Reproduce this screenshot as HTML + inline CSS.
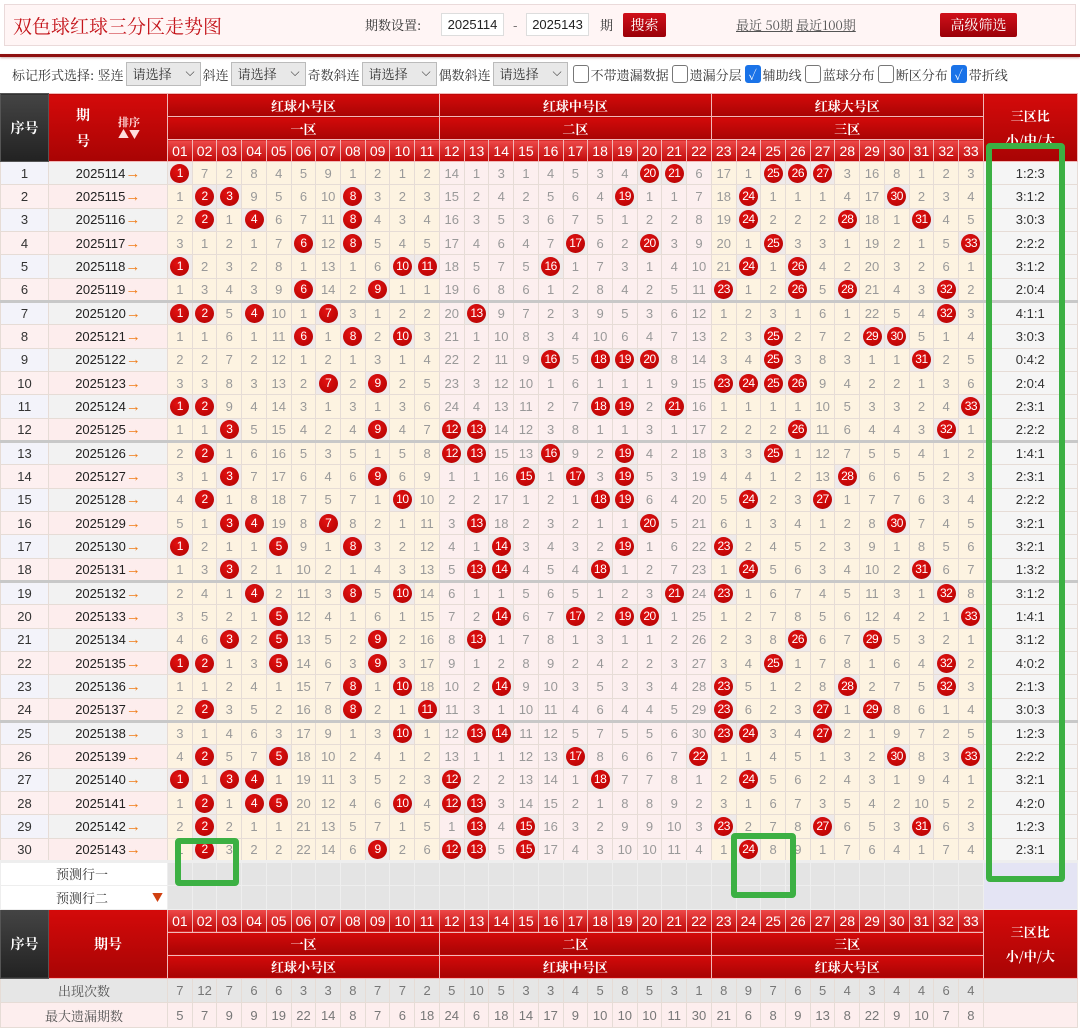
<!DOCTYPE html>
<html><head><meta charset="utf-8">
<style>
*{margin:0;padding:0;box-sizing:border-box}
body{width:1080px;height:1029px;overflow:hidden;background:#fff;font-family:"Liberation Sans","Noto Serif CJK SC",serif;position:relative}
#top{position:absolute;left:4px;top:4px;width:1072px;height:42px;background:#fff5f5;border:1px solid #eadada}
#top .t{position:absolute;left:8px;top:7px;font-size:19px;color:#c4141a;font-family:"Noto Serif CJK SC",serif}
#top .l{position:absolute;top:10px;font-size:13px;color:#333;font-family:"Noto Serif CJK SC",serif}
#top .in{position:absolute;top:8px;height:23px;width:63px;border:1px solid #ddd;background:#fff;font-size:13px;line-height:21px;text-align:center;color:#222}
#top .btn{position:absolute;top:8px;height:24px;background:linear-gradient(#d0101a,#9a0008);color:#fff;font-size:14px;line-height:24px;text-align:center;border-radius:2px;font-family:"Noto Serif CJK SC",serif}
#top a{color:#555;text-decoration:underline}
#line{position:absolute;left:0;top:54px;width:1080px;height:3px;background:#8e1010;box-shadow:0 1px 2px #caa}
#flt{position:absolute;left:12px;top:61px;height:26px;font-size:13px;color:#333;font-family:"Noto Serif CJK SC",serif;white-space:nowrap;display:flex;align-items:center}
.sel{display:inline-block;width:75px;height:24px;border:1px solid #bbb;background:#e8e8e8;margin:0 2px;padding-left:6px;line-height:22px;position:relative}
.sel:after{content:"⌵";position:absolute;right:5px;top:-2px;font-size:12px;color:#333}
.cb{display:inline-block;width:16px;height:18px;border:1px solid #777;border-radius:3px;background:#fff;margin:0 2px 0 3px;vertical-align:middle}
.cb.on{background:#1a73e8;border-color:#1a73e8;color:#fff;font-size:13px;line-height:17px;text-align:center}
table{position:absolute;left:0;top:93px;width:1077px;border-collapse:collapse;table-layout:fixed}
td{border:1px solid #e6dcd6;text-align:center;font-size:13px;color:#999;padding:0;overflow:hidden;white-space:nowrap}
tr.d{height:23.33px}
.h td{background:linear-gradient(#d40a0a,#a80404);color:#fff;border:1px solid #f1b8b8;font-family:"Noto Serif CJK SC",serif;font-size:13px;font-weight:bold}
.h td.n{background:linear-gradient(#ee4a4a,#c00808);font-family:"Liberation Sans",sans-serif;font-weight:normal;font-size:14px}
.h td.k{background:linear-gradient(#444,#222);border-color:#555}
col.c1{background:#fdf3e1}col.c2{background:#fcefef}
td.b{background:#efeaea}
td.b i{display:inline-block;width:19px;height:19px;border-radius:50%;background:radial-gradient(circle at 40% 35%,#e21212,#b00000);color:#fff;font-style:normal;font-size:12px;line-height:19px;letter-spacing:-.5px;vertical-align:middle}
td.x{background:#f3f3fa;color:#333;font-size:13px}
td.q{background:#f2f2f2;color:#222;font-size:13px}
tr.d:nth-child(even) td.x{background:#fdf0f0}
tr.d:nth-child(even) td.q{background:#fdeded}
td.q s{text-decoration:none;color:#f07d18;font-weight:bold;font-size:15px;line-height:10px}
td.r{background:#f5f5f5;color:#333;font-size:13px}
tr.g td{border-top:3px solid #c8c8c8}
tr.p{height:24px}
tr.p td{background:#e4e4e4;border-color:#eee}
tr.p td.lb{background:#fff;color:#333;font-family:"Noto Serif CJK SC",serif;text-align:left;padding-left:55px;position:relative}
tr.p td.lv{background:#e4e4f4}
tr.s1,tr.s2{height:24.5px}
tr.s1 td{background:#e6e6e6;color:#777}
tr.s2 td{background:#fdeeee;color:#777}
tr.s1 td.lb,tr.s2 td.lb{font-family:"Noto Serif CJK SC",serif;color:#555}
.gb{position:absolute;border:6px solid #3cb043;border-radius:4px}
</style></head><body>
<div id="top">
<div class="t">双色球红球三分区走势图</div>
<div class="l" style="left:360px">期数设置:</div>
<div class="in" style="left:436px">2025114</div>
<div class="l" style="left:508px">-</div>
<div class="in" style="left:521px">2025143</div>
<div class="l" style="left:595px">期</div>
<div class="btn" style="left:618px;width:43px">搜索</div>
<div class="l" style="left:731px"><a>最近 50期</a> <a>最近100期</a></div>
<div class="btn" style="left:935px;width:77px">高级筛选</div>
</div>
<div id="line"></div>
<div id="flt">标记形式选择: 竖连<span class="sel">请选择</span>斜连<span class="sel">请选择</span>奇数斜连<span class="sel">请选择</span>偶数斜连<span class="sel">请选择</span><span class="cb"></span>不带遗漏数据<span class="cb"></span>遗漏分层<span class="cb on">✓</span>辅助线<span class="cb"></span>蓝球分布<span class="cb"></span>断区分布<span class="cb on">✓</span>带折线</div>

<table>
<colgroup><col style="width:48px"><col style="width:119px"><col class="c1" span="11" style="width:24.73px"><col class="c2" span="11" style="width:24.73px"><col class="c1" span="11" style="width:24.73px"><col style="width:94px"></colgroup>
<tbody>
<tr class="h" style="height:23px"><td class="k" rowspan="3" style="font-size:14px">序号</td><td rowspan="3"><div style="display:flex;align-items:center;justify-content:center;gap:28px"><div style="line-height:26px;font-size:14px">期<br>号</div><div style="font-size:11px;line-height:12px;color:#fdd">排序<br>▲▼</div></div></td><td colspan="11">红球小号区</td><td colspan="11">红球中号区</td><td colspan="11">红球大号区</td><td rowspan="3" style="line-height:24px">三区比<br>小/中/大</td></tr>
<tr class="h" style="height:23px"><td colspan="11">一区</td><td colspan="11">二区</td><td colspan="11">三区</td></tr>
<tr class="h" style="height:22px"><td class="n">01</td><td class="n">02</td><td class="n">03</td><td class="n">04</td><td class="n">05</td><td class="n">06</td><td class="n">07</td><td class="n">08</td><td class="n">09</td><td class="n">10</td><td class="n">11</td><td class="n">12</td><td class="n">13</td><td class="n">14</td><td class="n">15</td><td class="n">16</td><td class="n">17</td><td class="n">18</td><td class="n">19</td><td class="n">20</td><td class="n">21</td><td class="n">22</td><td class="n">23</td><td class="n">24</td><td class="n">25</td><td class="n">26</td><td class="n">27</td><td class="n">28</td><td class="n">29</td><td class="n">30</td><td class="n">31</td><td class="n">32</td><td class="n">33</td></tr>
</tbody>
<tbody>
<tr class="d"><td class="x">1</td><td class="q">2025114<s>→</s></td><td class="b"><i>1</i></td><td>7</td><td>2</td><td>8</td><td>4</td><td>5</td><td>9</td><td>1</td><td>2</td><td>1</td><td>2</td><td>14</td><td>1</td><td>3</td><td>1</td><td>4</td><td>5</td><td>3</td><td>4</td><td class="b"><i>20</i></td><td class="b"><i>21</i></td><td>6</td><td>17</td><td>1</td><td class="b"><i>25</i></td><td class="b"><i>26</i></td><td class="b"><i>27</i></td><td>3</td><td>16</td><td>8</td><td>1</td><td>2</td><td>3</td><td class="r">1:2:3</td></tr>
<tr class="d"><td class="x">2</td><td class="q">2025115<s>→</s></td><td>1</td><td class="b"><i>2</i></td><td class="b"><i>3</i></td><td>9</td><td>5</td><td>6</td><td>10</td><td class="b"><i>8</i></td><td>3</td><td>2</td><td>3</td><td>15</td><td>2</td><td>4</td><td>2</td><td>5</td><td>6</td><td>4</td><td class="b"><i>19</i></td><td>1</td><td>1</td><td>7</td><td>18</td><td class="b"><i>24</i></td><td>1</td><td>1</td><td>1</td><td>4</td><td>17</td><td class="b"><i>30</i></td><td>2</td><td>3</td><td>4</td><td class="r">3:1:2</td></tr>
<tr class="d"><td class="x">3</td><td class="q">2025116<s>→</s></td><td>2</td><td class="b"><i>2</i></td><td>1</td><td class="b"><i>4</i></td><td>6</td><td>7</td><td>11</td><td class="b"><i>8</i></td><td>4</td><td>3</td><td>4</td><td>16</td><td>3</td><td>5</td><td>3</td><td>6</td><td>7</td><td>5</td><td>1</td><td>2</td><td>2</td><td>8</td><td>19</td><td class="b"><i>24</i></td><td>2</td><td>2</td><td>2</td><td class="b"><i>28</i></td><td>18</td><td>1</td><td class="b"><i>31</i></td><td>4</td><td>5</td><td class="r">3:0:3</td></tr>
<tr class="d"><td class="x">4</td><td class="q">2025117<s>→</s></td><td>3</td><td>1</td><td>2</td><td>1</td><td>7</td><td class="b"><i>6</i></td><td>12</td><td class="b"><i>8</i></td><td>5</td><td>4</td><td>5</td><td>17</td><td>4</td><td>6</td><td>4</td><td>7</td><td class="b"><i>17</i></td><td>6</td><td>2</td><td class="b"><i>20</i></td><td>3</td><td>9</td><td>20</td><td>1</td><td class="b"><i>25</i></td><td>3</td><td>3</td><td>1</td><td>19</td><td>2</td><td>1</td><td>5</td><td class="b"><i>33</i></td><td class="r">2:2:2</td></tr>
<tr class="d"><td class="x">5</td><td class="q">2025118<s>→</s></td><td class="b"><i>1</i></td><td>2</td><td>3</td><td>2</td><td>8</td><td>1</td><td>13</td><td>1</td><td>6</td><td class="b"><i>10</i></td><td class="b"><i>11</i></td><td>18</td><td>5</td><td>7</td><td>5</td><td class="b"><i>16</i></td><td>1</td><td>7</td><td>3</td><td>1</td><td>4</td><td>10</td><td>21</td><td class="b"><i>24</i></td><td>1</td><td class="b"><i>26</i></td><td>4</td><td>2</td><td>20</td><td>3</td><td>2</td><td>6</td><td>1</td><td class="r">3:1:2</td></tr>
<tr class="d"><td class="x">6</td><td class="q">2025119<s>→</s></td><td>1</td><td>3</td><td>4</td><td>3</td><td>9</td><td class="b"><i>6</i></td><td>14</td><td>2</td><td class="b"><i>9</i></td><td>1</td><td>1</td><td>19</td><td>6</td><td>8</td><td>6</td><td>1</td><td>2</td><td>8</td><td>4</td><td>2</td><td>5</td><td>11</td><td class="b"><i>23</i></td><td>1</td><td>2</td><td class="b"><i>26</i></td><td>5</td><td class="b"><i>28</i></td><td>21</td><td>4</td><td>3</td><td class="b"><i>32</i></td><td>2</td><td class="r">2:0:4</td></tr>
<tr class="d g"><td class="x">7</td><td class="q">2025120<s>→</s></td><td class="b"><i>1</i></td><td class="b"><i>2</i></td><td>5</td><td class="b"><i>4</i></td><td>10</td><td>1</td><td class="b"><i>7</i></td><td>3</td><td>1</td><td>2</td><td>2</td><td>20</td><td class="b"><i>13</i></td><td>9</td><td>7</td><td>2</td><td>3</td><td>9</td><td>5</td><td>3</td><td>6</td><td>12</td><td>1</td><td>2</td><td>3</td><td>1</td><td>6</td><td>1</td><td>22</td><td>5</td><td>4</td><td class="b"><i>32</i></td><td>3</td><td class="r">4:1:1</td></tr>
<tr class="d"><td class="x">8</td><td class="q">2025121<s>→</s></td><td>1</td><td>1</td><td>6</td><td>1</td><td>11</td><td class="b"><i>6</i></td><td>1</td><td class="b"><i>8</i></td><td>2</td><td class="b"><i>10</i></td><td>3</td><td>21</td><td>1</td><td>10</td><td>8</td><td>3</td><td>4</td><td>10</td><td>6</td><td>4</td><td>7</td><td>13</td><td>2</td><td>3</td><td class="b"><i>25</i></td><td>2</td><td>7</td><td>2</td><td class="b"><i>29</i></td><td class="b"><i>30</i></td><td>5</td><td>1</td><td>4</td><td class="r">3:0:3</td></tr>
<tr class="d"><td class="x">9</td><td class="q">2025122<s>→</s></td><td>2</td><td>2</td><td>7</td><td>2</td><td>12</td><td>1</td><td>2</td><td>1</td><td>3</td><td>1</td><td>4</td><td>22</td><td>2</td><td>11</td><td>9</td><td class="b"><i>16</i></td><td>5</td><td class="b"><i>18</i></td><td class="b"><i>19</i></td><td class="b"><i>20</i></td><td>8</td><td>14</td><td>3</td><td>4</td><td class="b"><i>25</i></td><td>3</td><td>8</td><td>3</td><td>1</td><td>1</td><td class="b"><i>31</i></td><td>2</td><td>5</td><td class="r">0:4:2</td></tr>
<tr class="d"><td class="x">10</td><td class="q">2025123<s>→</s></td><td>3</td><td>3</td><td>8</td><td>3</td><td>13</td><td>2</td><td class="b"><i>7</i></td><td>2</td><td class="b"><i>9</i></td><td>2</td><td>5</td><td>23</td><td>3</td><td>12</td><td>10</td><td>1</td><td>6</td><td>1</td><td>1</td><td>1</td><td>9</td><td>15</td><td class="b"><i>23</i></td><td class="b"><i>24</i></td><td class="b"><i>25</i></td><td class="b"><i>26</i></td><td>9</td><td>4</td><td>2</td><td>2</td><td>1</td><td>3</td><td>6</td><td class="r">2:0:4</td></tr>
<tr class="d"><td class="x">11</td><td class="q">2025124<s>→</s></td><td class="b"><i>1</i></td><td class="b"><i>2</i></td><td>9</td><td>4</td><td>14</td><td>3</td><td>1</td><td>3</td><td>1</td><td>3</td><td>6</td><td>24</td><td>4</td><td>13</td><td>11</td><td>2</td><td>7</td><td class="b"><i>18</i></td><td class="b"><i>19</i></td><td>2</td><td class="b"><i>21</i></td><td>16</td><td>1</td><td>1</td><td>1</td><td>1</td><td>10</td><td>5</td><td>3</td><td>3</td><td>2</td><td>4</td><td class="b"><i>33</i></td><td class="r">2:3:1</td></tr>
<tr class="d"><td class="x">12</td><td class="q">2025125<s>→</s></td><td>1</td><td>1</td><td class="b"><i>3</i></td><td>5</td><td>15</td><td>4</td><td>2</td><td>4</td><td class="b"><i>9</i></td><td>4</td><td>7</td><td class="b"><i>12</i></td><td class="b"><i>13</i></td><td>14</td><td>12</td><td>3</td><td>8</td><td>1</td><td>1</td><td>3</td><td>1</td><td>17</td><td>2</td><td>2</td><td>2</td><td class="b"><i>26</i></td><td>11</td><td>6</td><td>4</td><td>4</td><td>3</td><td class="b"><i>32</i></td><td>1</td><td class="r">2:2:2</td></tr>
<tr class="d g"><td class="x">13</td><td class="q">2025126<s>→</s></td><td>2</td><td class="b"><i>2</i></td><td>1</td><td>6</td><td>16</td><td>5</td><td>3</td><td>5</td><td>1</td><td>5</td><td>8</td><td class="b"><i>12</i></td><td class="b"><i>13</i></td><td>15</td><td>13</td><td class="b"><i>16</i></td><td>9</td><td>2</td><td class="b"><i>19</i></td><td>4</td><td>2</td><td>18</td><td>3</td><td>3</td><td class="b"><i>25</i></td><td>1</td><td>12</td><td>7</td><td>5</td><td>5</td><td>4</td><td>1</td><td>2</td><td class="r">1:4:1</td></tr>
<tr class="d"><td class="x">14</td><td class="q">2025127<s>→</s></td><td>3</td><td>1</td><td class="b"><i>3</i></td><td>7</td><td>17</td><td>6</td><td>4</td><td>6</td><td class="b"><i>9</i></td><td>6</td><td>9</td><td>1</td><td>1</td><td>16</td><td class="b"><i>15</i></td><td>1</td><td class="b"><i>17</i></td><td>3</td><td class="b"><i>19</i></td><td>5</td><td>3</td><td>19</td><td>4</td><td>4</td><td>1</td><td>2</td><td>13</td><td class="b"><i>28</i></td><td>6</td><td>6</td><td>5</td><td>2</td><td>3</td><td class="r">2:3:1</td></tr>
<tr class="d"><td class="x">15</td><td class="q">2025128<s>→</s></td><td>4</td><td class="b"><i>2</i></td><td>1</td><td>8</td><td>18</td><td>7</td><td>5</td><td>7</td><td>1</td><td class="b"><i>10</i></td><td>10</td><td>2</td><td>2</td><td>17</td><td>1</td><td>2</td><td>1</td><td class="b"><i>18</i></td><td class="b"><i>19</i></td><td>6</td><td>4</td><td>20</td><td>5</td><td class="b"><i>24</i></td><td>2</td><td>3</td><td class="b"><i>27</i></td><td>1</td><td>7</td><td>7</td><td>6</td><td>3</td><td>4</td><td class="r">2:2:2</td></tr>
<tr class="d"><td class="x">16</td><td class="q">2025129<s>→</s></td><td>5</td><td>1</td><td class="b"><i>3</i></td><td class="b"><i>4</i></td><td>19</td><td>8</td><td class="b"><i>7</i></td><td>8</td><td>2</td><td>1</td><td>11</td><td>3</td><td class="b"><i>13</i></td><td>18</td><td>2</td><td>3</td><td>2</td><td>1</td><td>1</td><td class="b"><i>20</i></td><td>5</td><td>21</td><td>6</td><td>1</td><td>3</td><td>4</td><td>1</td><td>2</td><td>8</td><td class="b"><i>30</i></td><td>7</td><td>4</td><td>5</td><td class="r">3:2:1</td></tr>
<tr class="d"><td class="x">17</td><td class="q">2025130<s>→</s></td><td class="b"><i>1</i></td><td>2</td><td>1</td><td>1</td><td class="b"><i>5</i></td><td>9</td><td>1</td><td class="b"><i>8</i></td><td>3</td><td>2</td><td>12</td><td>4</td><td>1</td><td class="b"><i>14</i></td><td>3</td><td>4</td><td>3</td><td>2</td><td class="b"><i>19</i></td><td>1</td><td>6</td><td>22</td><td class="b"><i>23</i></td><td>2</td><td>4</td><td>5</td><td>2</td><td>3</td><td>9</td><td>1</td><td>8</td><td>5</td><td>6</td><td class="r">3:2:1</td></tr>
<tr class="d"><td class="x">18</td><td class="q">2025131<s>→</s></td><td>1</td><td>3</td><td class="b"><i>3</i></td><td>2</td><td>1</td><td>10</td><td>2</td><td>1</td><td>4</td><td>3</td><td>13</td><td>5</td><td class="b"><i>13</i></td><td class="b"><i>14</i></td><td>4</td><td>5</td><td>4</td><td class="b"><i>18</i></td><td>1</td><td>2</td><td>7</td><td>23</td><td>1</td><td class="b"><i>24</i></td><td>5</td><td>6</td><td>3</td><td>4</td><td>10</td><td>2</td><td class="b"><i>31</i></td><td>6</td><td>7</td><td class="r">1:3:2</td></tr>
<tr class="d g"><td class="x">19</td><td class="q">2025132<s>→</s></td><td>2</td><td>4</td><td>1</td><td class="b"><i>4</i></td><td>2</td><td>11</td><td>3</td><td class="b"><i>8</i></td><td>5</td><td class="b"><i>10</i></td><td>14</td><td>6</td><td>1</td><td>1</td><td>5</td><td>6</td><td>5</td><td>1</td><td>2</td><td>3</td><td class="b"><i>21</i></td><td>24</td><td class="b"><i>23</i></td><td>1</td><td>6</td><td>7</td><td>4</td><td>5</td><td>11</td><td>3</td><td>1</td><td class="b"><i>32</i></td><td>8</td><td class="r">3:1:2</td></tr>
<tr class="d"><td class="x">20</td><td class="q">2025133<s>→</s></td><td>3</td><td>5</td><td>2</td><td>1</td><td class="b"><i>5</i></td><td>12</td><td>4</td><td>1</td><td>6</td><td>1</td><td>15</td><td>7</td><td>2</td><td class="b"><i>14</i></td><td>6</td><td>7</td><td class="b"><i>17</i></td><td>2</td><td class="b"><i>19</i></td><td class="b"><i>20</i></td><td>1</td><td>25</td><td>1</td><td>2</td><td>7</td><td>8</td><td>5</td><td>6</td><td>12</td><td>4</td><td>2</td><td>1</td><td class="b"><i>33</i></td><td class="r">1:4:1</td></tr>
<tr class="d"><td class="x">21</td><td class="q">2025134<s>→</s></td><td>4</td><td>6</td><td class="b"><i>3</i></td><td>2</td><td class="b"><i>5</i></td><td>13</td><td>5</td><td>2</td><td class="b"><i>9</i></td><td>2</td><td>16</td><td>8</td><td class="b"><i>13</i></td><td>1</td><td>7</td><td>8</td><td>1</td><td>3</td><td>1</td><td>1</td><td>2</td><td>26</td><td>2</td><td>3</td><td>8</td><td class="b"><i>26</i></td><td>6</td><td>7</td><td class="b"><i>29</i></td><td>5</td><td>3</td><td>2</td><td>1</td><td class="r">3:1:2</td></tr>
<tr class="d"><td class="x">22</td><td class="q">2025135<s>→</s></td><td class="b"><i>1</i></td><td class="b"><i>2</i></td><td>1</td><td>3</td><td class="b"><i>5</i></td><td>14</td><td>6</td><td>3</td><td class="b"><i>9</i></td><td>3</td><td>17</td><td>9</td><td>1</td><td>2</td><td>8</td><td>9</td><td>2</td><td>4</td><td>2</td><td>2</td><td>3</td><td>27</td><td>3</td><td>4</td><td class="b"><i>25</i></td><td>1</td><td>7</td><td>8</td><td>1</td><td>6</td><td>4</td><td class="b"><i>32</i></td><td>2</td><td class="r">4:0:2</td></tr>
<tr class="d"><td class="x">23</td><td class="q">2025136<s>→</s></td><td>1</td><td>1</td><td>2</td><td>4</td><td>1</td><td>15</td><td>7</td><td class="b"><i>8</i></td><td>1</td><td class="b"><i>10</i></td><td>18</td><td>10</td><td>2</td><td class="b"><i>14</i></td><td>9</td><td>10</td><td>3</td><td>5</td><td>3</td><td>3</td><td>4</td><td>28</td><td class="b"><i>23</i></td><td>5</td><td>1</td><td>2</td><td>8</td><td class="b"><i>28</i></td><td>2</td><td>7</td><td>5</td><td class="b"><i>32</i></td><td>3</td><td class="r">2:1:3</td></tr>
<tr class="d"><td class="x">24</td><td class="q">2025137<s>→</s></td><td>2</td><td class="b"><i>2</i></td><td>3</td><td>5</td><td>2</td><td>16</td><td>8</td><td class="b"><i>8</i></td><td>2</td><td>1</td><td class="b"><i>11</i></td><td>11</td><td>3</td><td>1</td><td>10</td><td>11</td><td>4</td><td>6</td><td>4</td><td>4</td><td>5</td><td>29</td><td class="b"><i>23</i></td><td>6</td><td>2</td><td>3</td><td class="b"><i>27</i></td><td>1</td><td class="b"><i>29</i></td><td>8</td><td>6</td><td>1</td><td>4</td><td class="r">3:0:3</td></tr>
<tr class="d g"><td class="x">25</td><td class="q">2025138<s>→</s></td><td>3</td><td>1</td><td>4</td><td>6</td><td>3</td><td>17</td><td>9</td><td>1</td><td>3</td><td class="b"><i>10</i></td><td>1</td><td>12</td><td class="b"><i>13</i></td><td class="b"><i>14</i></td><td>11</td><td>12</td><td>5</td><td>7</td><td>5</td><td>5</td><td>6</td><td>30</td><td class="b"><i>23</i></td><td class="b"><i>24</i></td><td>3</td><td>4</td><td class="b"><i>27</i></td><td>2</td><td>1</td><td>9</td><td>7</td><td>2</td><td>5</td><td class="r">1:2:3</td></tr>
<tr class="d"><td class="x">26</td><td class="q">2025139<s>→</s></td><td>4</td><td class="b"><i>2</i></td><td>5</td><td>7</td><td class="b"><i>5</i></td><td>18</td><td>10</td><td>2</td><td>4</td><td>1</td><td>2</td><td>13</td><td>1</td><td>1</td><td>12</td><td>13</td><td class="b"><i>17</i></td><td>8</td><td>6</td><td>6</td><td>7</td><td class="b"><i>22</i></td><td>1</td><td>1</td><td>4</td><td>5</td><td>1</td><td>3</td><td>2</td><td class="b"><i>30</i></td><td>8</td><td>3</td><td class="b"><i>33</i></td><td class="r">2:2:2</td></tr>
<tr class="d"><td class="x">27</td><td class="q">2025140<s>→</s></td><td class="b"><i>1</i></td><td>1</td><td class="b"><i>3</i></td><td class="b"><i>4</i></td><td>1</td><td>19</td><td>11</td><td>3</td><td>5</td><td>2</td><td>3</td><td class="b"><i>12</i></td><td>2</td><td>2</td><td>13</td><td>14</td><td>1</td><td class="b"><i>18</i></td><td>7</td><td>7</td><td>8</td><td>1</td><td>2</td><td class="b"><i>24</i></td><td>5</td><td>6</td><td>2</td><td>4</td><td>3</td><td>1</td><td>9</td><td>4</td><td>1</td><td class="r">3:2:1</td></tr>
<tr class="d"><td class="x">28</td><td class="q">2025141<s>→</s></td><td>1</td><td class="b"><i>2</i></td><td>1</td><td class="b"><i>4</i></td><td class="b"><i>5</i></td><td>20</td><td>12</td><td>4</td><td>6</td><td class="b"><i>10</i></td><td>4</td><td class="b"><i>12</i></td><td class="b"><i>13</i></td><td>3</td><td>14</td><td>15</td><td>2</td><td>1</td><td>8</td><td>8</td><td>9</td><td>2</td><td>3</td><td>1</td><td>6</td><td>7</td><td>3</td><td>5</td><td>4</td><td>2</td><td>10</td><td>5</td><td>2</td><td class="r">4:2:0</td></tr>
<tr class="d"><td class="x">29</td><td class="q">2025142<s>→</s></td><td>2</td><td class="b"><i>2</i></td><td>2</td><td>1</td><td>1</td><td>21</td><td>13</td><td>5</td><td>7</td><td>1</td><td>5</td><td>1</td><td class="b"><i>13</i></td><td>4</td><td class="b"><i>15</i></td><td>16</td><td>3</td><td>2</td><td>9</td><td>9</td><td>10</td><td>3</td><td class="b"><i>23</i></td><td>2</td><td>7</td><td>8</td><td class="b"><i>27</i></td><td>6</td><td>5</td><td>3</td><td class="b"><i>31</i></td><td>6</td><td>3</td><td class="r">1:2:3</td></tr>
<tr class="d"><td class="x">30</td><td class="q">2025143<s>→</s></td><td>1</td><td class="b"><i>2</i></td><td>3</td><td>2</td><td>2</td><td>22</td><td>14</td><td>6</td><td class="b"><i>9</i></td><td>2</td><td>6</td><td class="b"><i>12</i></td><td class="b"><i>13</i></td><td>5</td><td class="b"><i>15</i></td><td>17</td><td>4</td><td>3</td><td>10</td><td>10</td><td>11</td><td>4</td><td>1</td><td class="b"><i>24</i></td><td>8</td><td>9</td><td>1</td><td>7</td><td>6</td><td>4</td><td>1</td><td>7</td><td>4</td><td class="r">2:3:1</td></tr>
</tbody>
<tbody>
<tr class="p g"><td class="lb" colspan="2">预测行一</td><td></td><td></td><td></td><td></td><td></td><td></td><td></td><td></td><td></td><td></td><td></td><td></td><td></td><td></td><td></td><td></td><td></td><td></td><td></td><td></td><td></td><td></td><td></td><td></td><td></td><td></td><td></td><td></td><td></td><td></td><td></td><td></td><td></td><td class="lv" rowspan="2"></td></tr>
<tr class="p"><td class="lb" colspan="2">预测行二<span style="position:absolute;right:4px;top:3px;color:#d04010;font-size:11px">▼</span></td><td></td><td></td><td></td><td></td><td></td><td></td><td></td><td></td><td></td><td></td><td></td><td></td><td></td><td></td><td></td><td></td><td></td><td></td><td></td><td></td><td></td><td></td><td></td><td></td><td></td><td></td><td></td><td></td><td></td><td></td><td></td><td></td><td></td></tr>
<tr class="h" style="height:23px"><td class="k" rowspan="3" style="font-size:14px">序号</td><td rowspan="3" style="font-size:14px">期号</td><td class="n">01</td><td class="n">02</td><td class="n">03</td><td class="n">04</td><td class="n">05</td><td class="n">06</td><td class="n">07</td><td class="n">08</td><td class="n">09</td><td class="n">10</td><td class="n">11</td><td class="n">12</td><td class="n">13</td><td class="n">14</td><td class="n">15</td><td class="n">16</td><td class="n">17</td><td class="n">18</td><td class="n">19</td><td class="n">20</td><td class="n">21</td><td class="n">22</td><td class="n">23</td><td class="n">24</td><td class="n">25</td><td class="n">26</td><td class="n">27</td><td class="n">28</td><td class="n">29</td><td class="n">30</td><td class="n">31</td><td class="n">32</td><td class="n">33</td><td rowspan="3" style="line-height:24px">三区比<br>小/中/大</td></tr>
<tr class="h" style="height:23px"><td colspan="11">一区</td><td colspan="11">二区</td><td colspan="11">三区</td></tr>
<tr class="h" style="height:23px"><td colspan="11">红球小号区</td><td colspan="11">红球中号区</td><td colspan="11">红球大号区</td></tr>
<tr class="s1"><td class="lb" colspan="2">出现次数</td><td>7</td><td>12</td><td>7</td><td>6</td><td>6</td><td>3</td><td>3</td><td>8</td><td>7</td><td>7</td><td>2</td><td>5</td><td>10</td><td>5</td><td>3</td><td>3</td><td>4</td><td>5</td><td>8</td><td>5</td><td>3</td><td>1</td><td>8</td><td>9</td><td>7</td><td>6</td><td>5</td><td>4</td><td>3</td><td>4</td><td>4</td><td>6</td><td>4</td><td></td></tr>
<tr class="s2"><td class="lb" colspan="2">最大遗漏期数</td><td>5</td><td>7</td><td>9</td><td>9</td><td>19</td><td>22</td><td>14</td><td>8</td><td>7</td><td>6</td><td>18</td><td>24</td><td>6</td><td>18</td><td>14</td><td>17</td><td>9</td><td>10</td><td>10</td><td>10</td><td>11</td><td>30</td><td>21</td><td>6</td><td>8</td><td>9</td><td>13</td><td>8</td><td>22</td><td>9</td><td>10</td><td>7</td><td>8</td><td></td></tr>
</tbody>
</table>
<div class="gb" style="left:175px;top:838px;width:64px;height:48px"></div>
<div class="gb" style="left:731px;top:833px;width:65px;height:65px"></div>
<div class="gb" style="left:986px;top:143px;width:79px;height:739px"></div>
</body></html>
